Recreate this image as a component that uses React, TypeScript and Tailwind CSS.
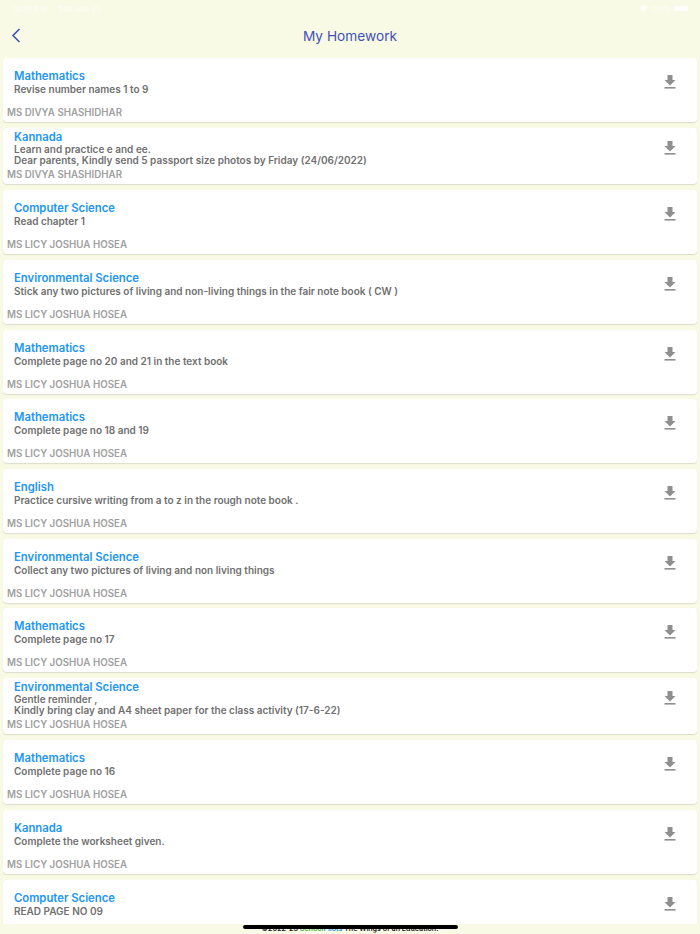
import React from 'react';

type Homework = { subject: string; lines: string[]; teacher: string };

const DIVYA = 'MS DIVYA SHASHIDHAR';
const LICY = 'MS LICY JOSHUA HOSEA';

const items: Homework[] = [
  { subject: 'Mathematics', lines: ['Revise number names 1 to 9'], teacher: DIVYA },
  { subject: 'Kannada', lines: ['Learn and practice e and ee.', 'Dear parents, Kindly send 5 passport size photos by Friday (24/06/2022)'], teacher: DIVYA },
  { subject: 'Computer Science', lines: ['Read chapter 1'], teacher: LICY },
  { subject: 'Environmental Science', lines: ['Stick any two pictures of living and non-living things in the fair note book ( CW )'], teacher: LICY },
  { subject: 'Mathematics', lines: ['Complete page no 20 and 21 in the text book'], teacher: LICY },
  { subject: 'Mathematics', lines: ['Complete page no 18 and 19'], teacher: LICY },
  { subject: 'English', lines: ['Practice cursive writing from a to z in the rough note book .'], teacher: LICY },
  { subject: 'Environmental Science', lines: ['Collect any two pictures of living and non living things'], teacher: LICY },
  { subject: 'Mathematics', lines: ['Complete page no 17'], teacher: LICY },
  { subject: 'Environmental Science', lines: ['Gentle reminder ,', 'Kindly bring clay and A4 sheet paper for the class activity (17-6-22)'], teacher: LICY },
  { subject: 'Mathematics', lines: ['Complete page no 16'], teacher: LICY },
  { subject: 'Kannada', lines: ['Complete the worksheet given.'], teacher: LICY },
  { subject: 'Computer Science', lines: ['READ PAGE NO 09'], teacher: LICY },
];

const DownloadIcon = () => (
  <svg width="12" height="14" viewBox="0 0 12 14" className="block fill-[#8f8f8f]">
    <path d="M3.5 0h5v5H11.5L6 10.5 0.5 5H3.5z" />
    <rect x="0.5" y="12" width="11" height="1.6" />
  </svg>
);

const Card = ({ item }: { item: Homework }) => {
  const compact = item.lines.length > 1;
  return (
    <div className={`flex shrink-0 justify-between rounded-[4px] bg-white shadow-[0_1px_1px_#dcdccb] ${compact ? 'h-[56.5px]' : 'h-[64px]'}`}>
      <div className={`flex flex-col pl-[4px] ${compact ? 'pt-[2px]' : 'pt-[11px]'}`}>
        <div className="pl-[7px] text-[11.3px] leading-[14px] font-semibold text-[#2196f3]">{item.subject}</div>
        <div className={`pl-[7px] text-[10px] font-semibold text-[#707070] ${compact ? 'leading-[11.5px]' : 'leading-[12px]'}`}>
          {item.lines.map((line, i) => (
            <div key={i}>{line}</div>
          ))}
        </div>
        <div className={`text-[9.75px] leading-[12px] font-semibold text-[#a0a0a0] ${compact ? 'mt-[2px]' : 'mt-[12px]'}`}>{item.teacher}</div>
      </div>
      <div className={`pr-[21px] ${compact ? 'pt-[13px]' : 'pt-[17px]'}`}>
        <DownloadIcon />
      </div>
    </div>
  );
};

export default function App() {
  return (
    <div className="relative flex h-[934px] w-[700px] flex-col overflow-hidden bg-[#f9fae6] font-['Inter',sans-serif]">
      {/* status bar, white on the pale background */}
      <div className="flex h-[16px] shrink-0 items-center justify-between px-[12px] pt-[1px] text-[8px] text-white">
        <div className="flex gap-[11px] opacity-80">
          <span>12:50 PM</span>
          <span>Thu Jun 23</span>
        </div>
        <div className="flex items-center gap-[2px] opacity-80">
          <svg width="9" height="7" viewBox="0 0 24 18" className="fill-white">
            <path d="M12 18L0 5.5C7-1.5 17-1.5 24 5.5z" />
          </svg>
          <span>100%</span>
          <div className="ml-[1px] h-[5px] w-[14px] rounded-[1px] bg-white" />
        </div>
      </div>

      <div className="relative flex h-[42.3px] shrink-0 items-center justify-center pb-[1px]">
        <svg width="10" height="15" viewBox="0 0 10 15" className="absolute left-[11px] top-[12px] fill-none stroke-[#3f51b5] stroke-[1.6]">
          <path d="M8.5 1L2 7.5 8.5 14" />
        </svg>
        <span className="text-[13.7px] text-[#3f51b5]">My Homework</span>
      </div>

      <div className="flex h-[865.7px] shrink-0 flex-col gap-[5.7px] overflow-hidden px-[3px]">
        {items.map((item, i) => (
          <Card key={i} item={item} />
        ))}
      </div>

      <div className="text-center text-[7.1px] leading-[9px] font-semibold text-[#222222]">
        ©2022-23 <span className="text-[#4caf50]">School</span>
        <span className="text-[#2196f3]">Pilots</span> The Wings of an Education.
      </div>

      {/* home indicator */}
      <div className="absolute bottom-[5px] left-[243px] h-[4px] w-[215px] rounded-full bg-black" />
    </div>
  );
}
